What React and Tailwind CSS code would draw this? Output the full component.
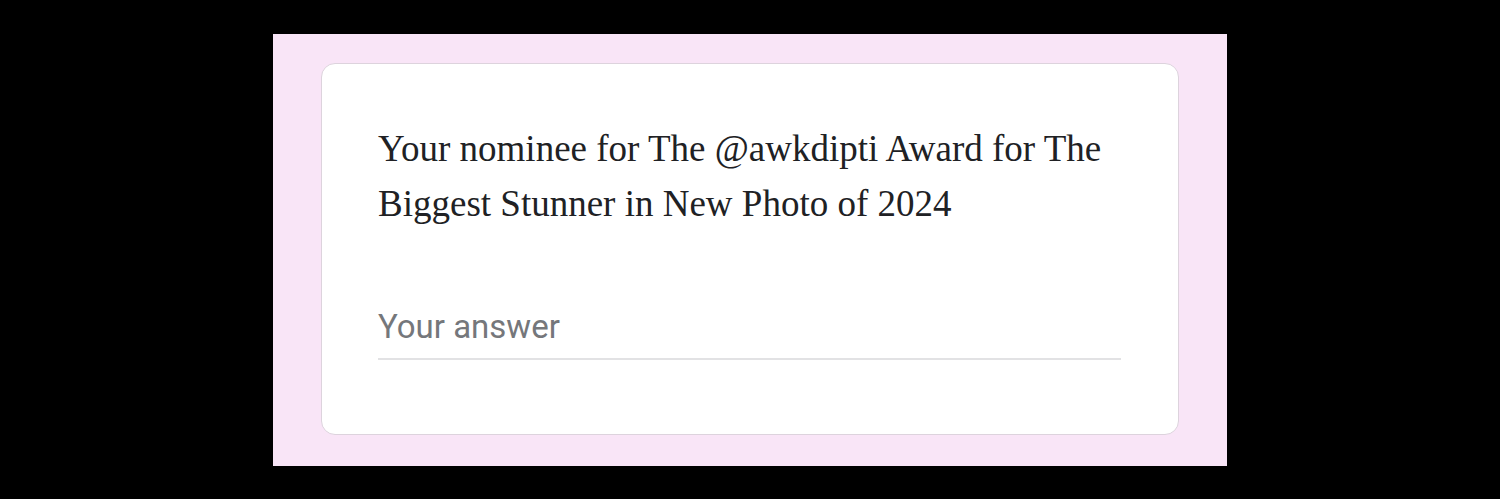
import React from 'react';

// Single short-answer question card from a form
const QuestionCard = ({ title, placeholder }) => {
  return (
    <div className="w-full h-[372px] bg-white rounded-[14px] border border-[#ddd3dd] pl-[56px] pr-[57px] pt-[57px]">
      <p className="font-['Liberation_Serif','Times_New_Roman',serif] text-[37px] leading-[55px] text-[#202124]">
        {title}
      </p>
      <div className="mt-[76px] pb-[11px] border-b-2 border-[#e2e2e4]">
        <span className="font-['Roboto',sans-serif] text-[33px] leading-[40px] text-[#75777b]">
          {placeholder}
        </span>
      </div>
    </div>
  );
};

const App = () => {
  return (
    <div className="w-full h-[499px] bg-black flex justify-center pt-[34px]">
      <div className="w-[954px] h-[432px] bg-[#f9e5f7] px-[48px] pt-[29px]">
        <QuestionCard
          title="Your nominee for The @awkdipti Award for The Biggest Stunner in New Photo of 2024"
          placeholder="Your answer"
        />
      </div>
    </div>
  );
};

export default App;
